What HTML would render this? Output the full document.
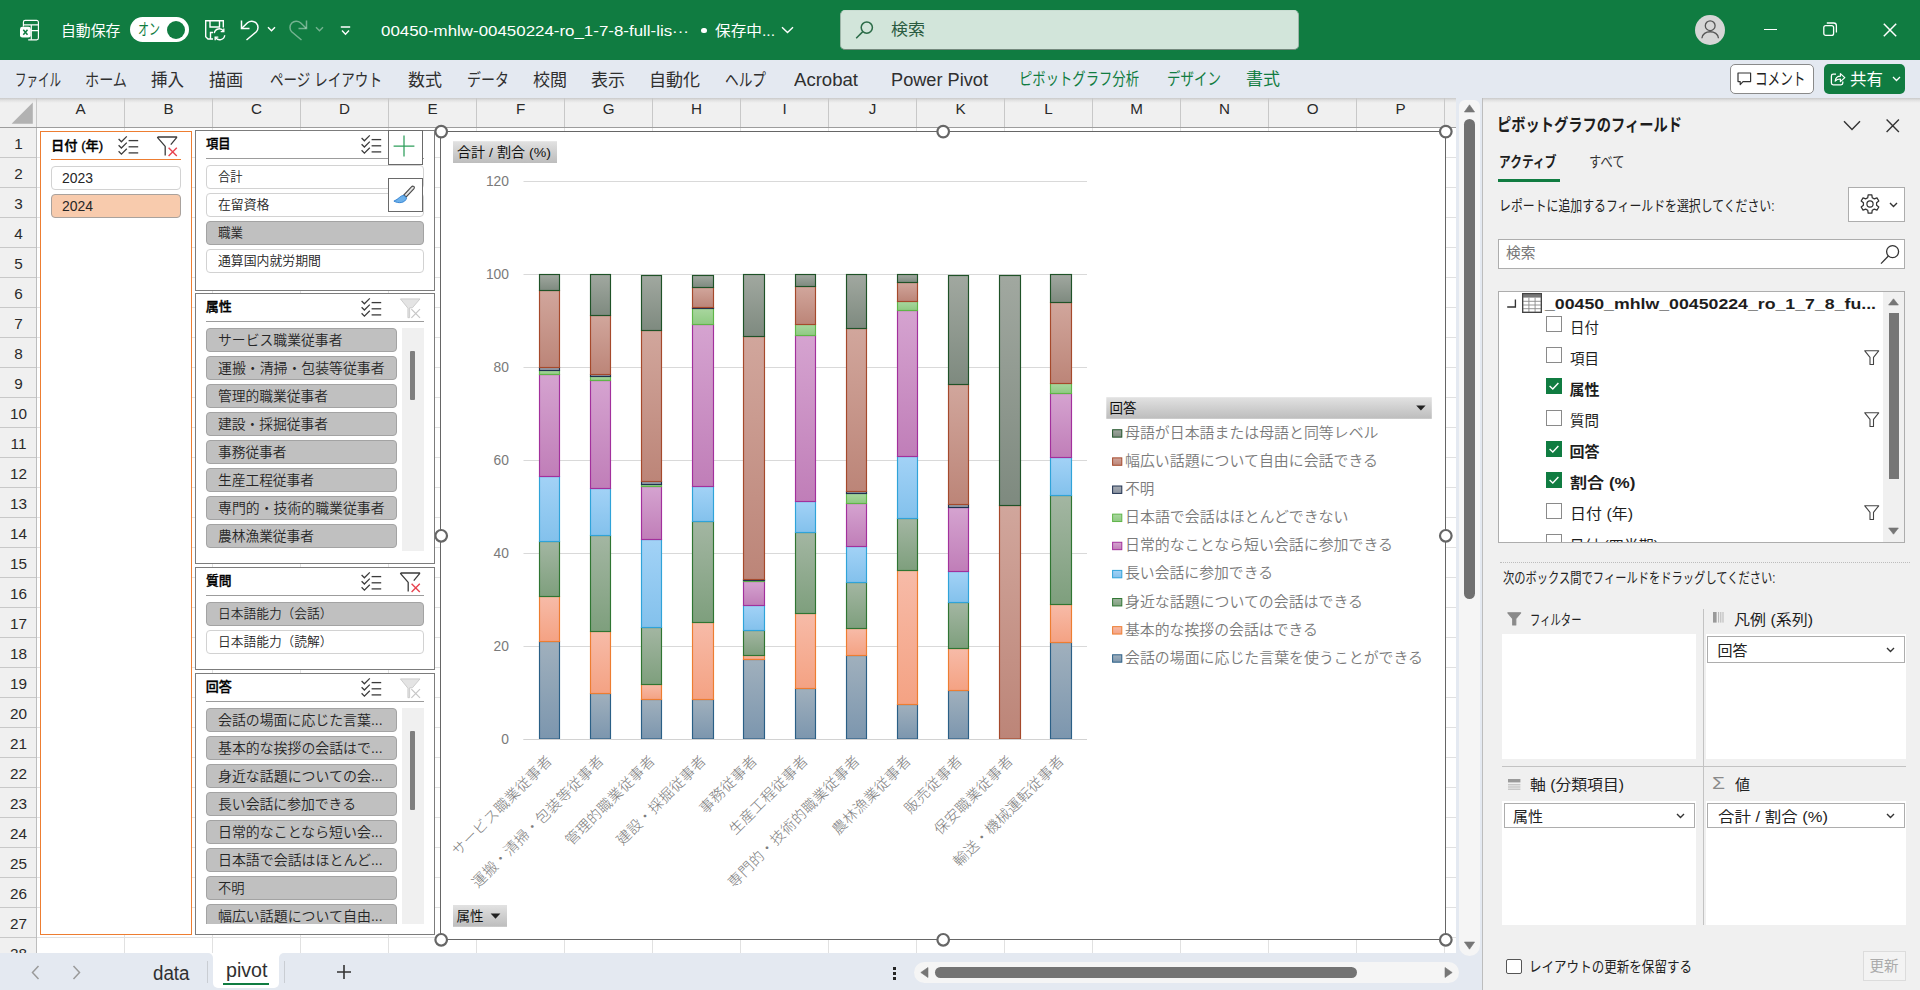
<!DOCTYPE html>
<html lang="ja"><head><meta charset="utf-8"><title>Excel</title>
<style>
html,body{margin:0;padding:0;}
body{width:1920px;height:990px;overflow:hidden;position:relative;background:#fff;font-family:"Liberation Sans","Noto Sans CJK JP",sans-serif;}
.b{position:absolute;box-sizing:border-box;display:block;}
.t{position:absolute;white-space:nowrap;display:block;}
svg{overflow:visible;}
</style></head><body>
<div class="b" style="left:0px;top:98px;width:1483px;height:855px;background:#fff;"></div>
<svg class="b" style="left:0px;top:0px;" width="1483" height="953" viewBox="0 0 1483 953"><path d="M36.5 128 V953" stroke="#E1E1E1" stroke-width="1"/><path d="M124.5 128 V953" stroke="#E1E1E1" stroke-width="1"/><path d="M212.5 128 V953" stroke="#E1E1E1" stroke-width="1"/><path d="M300.5 128 V953" stroke="#E1E1E1" stroke-width="1"/><path d="M388.5 128 V953" stroke="#E1E1E1" stroke-width="1"/><path d="M476.5 128 V953" stroke="#E1E1E1" stroke-width="1"/><path d="M564.5 128 V953" stroke="#E1E1E1" stroke-width="1"/><path d="M652.5 128 V953" stroke="#E1E1E1" stroke-width="1"/><path d="M740.5 128 V953" stroke="#E1E1E1" stroke-width="1"/><path d="M828.5 128 V953" stroke="#E1E1E1" stroke-width="1"/><path d="M916.5 128 V953" stroke="#E1E1E1" stroke-width="1"/><path d="M1004.5 128 V953" stroke="#E1E1E1" stroke-width="1"/><path d="M1092.5 128 V953" stroke="#E1E1E1" stroke-width="1"/><path d="M1180.5 128 V953" stroke="#E1E1E1" stroke-width="1"/><path d="M1268.5 128 V953" stroke="#E1E1E1" stroke-width="1"/><path d="M1356.5 128 V953" stroke="#E1E1E1" stroke-width="1"/><path d="M1444.5 128 V953" stroke="#E1E1E1" stroke-width="1"/><path d="M37 157.5 H1456" stroke="#E1E1E1" stroke-width="1"/><path d="M37 187.5 H1456" stroke="#E1E1E1" stroke-width="1"/><path d="M37 217.5 H1456" stroke="#E1E1E1" stroke-width="1"/><path d="M37 247.5 H1456" stroke="#E1E1E1" stroke-width="1"/><path d="M37 277.5 H1456" stroke="#E1E1E1" stroke-width="1"/><path d="M37 307.5 H1456" stroke="#E1E1E1" stroke-width="1"/><path d="M37 337.5 H1456" stroke="#E1E1E1" stroke-width="1"/><path d="M37 367.5 H1456" stroke="#E1E1E1" stroke-width="1"/><path d="M37 397.5 H1456" stroke="#E1E1E1" stroke-width="1"/><path d="M37 427.5 H1456" stroke="#E1E1E1" stroke-width="1"/><path d="M37 457.5 H1456" stroke="#E1E1E1" stroke-width="1"/><path d="M37 487.5 H1456" stroke="#E1E1E1" stroke-width="1"/><path d="M37 517.5 H1456" stroke="#E1E1E1" stroke-width="1"/><path d="M37 547.5 H1456" stroke="#E1E1E1" stroke-width="1"/><path d="M37 577.5 H1456" stroke="#E1E1E1" stroke-width="1"/><path d="M37 607.5 H1456" stroke="#E1E1E1" stroke-width="1"/><path d="M37 637.5 H1456" stroke="#E1E1E1" stroke-width="1"/><path d="M37 667.5 H1456" stroke="#E1E1E1" stroke-width="1"/><path d="M37 697.5 H1456" stroke="#E1E1E1" stroke-width="1"/><path d="M37 727.5 H1456" stroke="#E1E1E1" stroke-width="1"/><path d="M37 757.5 H1456" stroke="#E1E1E1" stroke-width="1"/><path d="M37 787.5 H1456" stroke="#E1E1E1" stroke-width="1"/><path d="M37 817.5 H1456" stroke="#E1E1E1" stroke-width="1"/><path d="M37 847.5 H1456" stroke="#E1E1E1" stroke-width="1"/><path d="M37 877.5 H1456" stroke="#E1E1E1" stroke-width="1"/><path d="M37 907.5 H1456" stroke="#E1E1E1" stroke-width="1"/><path d="M37 937.5 H1456" stroke="#E1E1E1" stroke-width="1"/></svg>
<div class="b" style="left:0px;top:98px;width:1456px;height:29.5px;background:#F0F0F0;"></div>
<div class="b" style="left:0px;top:127px;width:1456px;height:1px;background:#9D9D9D;"></div>
<div class="b" style="left:0px;top:97.7px;width:1457px;height:5px;background:linear-gradient(rgba(120,120,120,0.32),rgba(120,120,120,0.12) 45%,rgba(120,120,120,0));"></div>
<svg class="b" style="left:0px;top:0px;" width="1483" height="130" viewBox="0 0 1483 130"><path d="M36.5 98 V127" stroke="#C8C8C8" stroke-width="1"/><path d="M124.5 98 V127" stroke="#C8C8C8" stroke-width="1"/><path d="M212.5 98 V127" stroke="#C8C8C8" stroke-width="1"/><path d="M300.5 98 V127" stroke="#C8C8C8" stroke-width="1"/><path d="M388.5 98 V127" stroke="#C8C8C8" stroke-width="1"/><path d="M476.5 98 V127" stroke="#C8C8C8" stroke-width="1"/><path d="M564.5 98 V127" stroke="#C8C8C8" stroke-width="1"/><path d="M652.5 98 V127" stroke="#C8C8C8" stroke-width="1"/><path d="M740.5 98 V127" stroke="#C8C8C8" stroke-width="1"/><path d="M828.5 98 V127" stroke="#C8C8C8" stroke-width="1"/><path d="M916.5 98 V127" stroke="#C8C8C8" stroke-width="1"/><path d="M1004.5 98 V127" stroke="#C8C8C8" stroke-width="1"/><path d="M1092.5 98 V127" stroke="#C8C8C8" stroke-width="1"/><path d="M1180.5 98 V127" stroke="#C8C8C8" stroke-width="1"/><path d="M1268.5 98 V127" stroke="#C8C8C8" stroke-width="1"/><path d="M1356.5 98 V127" stroke="#C8C8C8" stroke-width="1"/><path d="M1444.5 98 V127" stroke="#C8C8C8" stroke-width="1"/></svg>
<span class="t" style="top:98.40px;font-size:15.2px;line-height:21px;color:#2A2A2A;left:80.6px;transform-origin:50% 50%;transform:translateX(-50%) scaleX(1.0000);">A</span>
<span class="t" style="top:98.40px;font-size:15.2px;line-height:21px;color:#2A2A2A;left:168.6px;transform-origin:50% 50%;transform:translateX(-50%) scaleX(1.0000);">B</span>
<span class="t" style="top:98.40px;font-size:15.2px;line-height:21px;color:#2A2A2A;left:256.6px;transform-origin:50% 50%;transform:translateX(-50%) scaleX(1.0000);">C</span>
<span class="t" style="top:98.40px;font-size:15.2px;line-height:21px;color:#2A2A2A;left:344.6px;transform-origin:50% 50%;transform:translateX(-50%) scaleX(1.0000);">D</span>
<span class="t" style="top:98.40px;font-size:15.2px;line-height:21px;color:#2A2A2A;left:432.6px;transform-origin:50% 50%;transform:translateX(-50%) scaleX(1.0000);">E</span>
<span class="t" style="top:98.40px;font-size:15.2px;line-height:21px;color:#2A2A2A;left:520.6px;transform-origin:50% 50%;transform:translateX(-50%) scaleX(1.0000);">F</span>
<span class="t" style="top:98.40px;font-size:15.2px;line-height:21px;color:#2A2A2A;left:608.6px;transform-origin:50% 50%;transform:translateX(-50%) scaleX(1.0000);">G</span>
<span class="t" style="top:98.40px;font-size:15.2px;line-height:21px;color:#2A2A2A;left:696.6px;transform-origin:50% 50%;transform:translateX(-50%) scaleX(1.0000);">H</span>
<span class="t" style="top:98.40px;font-size:15.2px;line-height:21px;color:#2A2A2A;left:784.6px;transform-origin:50% 50%;transform:translateX(-50%) scaleX(1.0000);">I</span>
<span class="t" style="top:98.40px;font-size:15.2px;line-height:21px;color:#2A2A2A;left:872.6px;transform-origin:50% 50%;transform:translateX(-50%) scaleX(1.0000);">J</span>
<span class="t" style="top:98.40px;font-size:15.2px;line-height:21px;color:#2A2A2A;left:960.6px;transform-origin:50% 50%;transform:translateX(-50%) scaleX(1.0000);">K</span>
<span class="t" style="top:98.40px;font-size:15.2px;line-height:21px;color:#2A2A2A;left:1048.6px;transform-origin:50% 50%;transform:translateX(-50%) scaleX(1.0000);">L</span>
<span class="t" style="top:98.40px;font-size:15.2px;line-height:21px;color:#2A2A2A;left:1136.6px;transform-origin:50% 50%;transform:translateX(-50%) scaleX(1.0000);">M</span>
<span class="t" style="top:98.40px;font-size:15.2px;line-height:21px;color:#2A2A2A;left:1224.6px;transform-origin:50% 50%;transform:translateX(-50%) scaleX(1.0000);">N</span>
<span class="t" style="top:98.40px;font-size:15.2px;line-height:21px;color:#2A2A2A;left:1312.6px;transform-origin:50% 50%;transform:translateX(-50%) scaleX(1.0000);">O</span>
<span class="t" style="top:98.40px;font-size:15.2px;line-height:21px;color:#2A2A2A;left:1400.6px;transform-origin:50% 50%;transform:translateX(-50%) scaleX(1.0000);">P</span>
<svg class="b" style="left:0px;top:98px;" width="37" height="30" viewBox="0 0 37 30"><path d="M32.8 4.5 V25.8 H11.6 Z" fill="#B2B2B2"/></svg>
<div class="b" style="left:0px;top:128px;width:36px;height:825px;background:#F0F0F0;"></div>
<div class="b" style="left:36px;top:128px;width:1px;height:825px;background:#BDBDBD;"></div>
<svg class="b" style="left:0px;top:0px;" width="40" height="953" viewBox="0 0 40 953"><path d="M0 157.5 H36" stroke="#C8C8C8" stroke-width="1"/><path d="M0 187.5 H36" stroke="#C8C8C8" stroke-width="1"/><path d="M0 217.5 H36" stroke="#C8C8C8" stroke-width="1"/><path d="M0 247.5 H36" stroke="#C8C8C8" stroke-width="1"/><path d="M0 277.5 H36" stroke="#C8C8C8" stroke-width="1"/><path d="M0 307.5 H36" stroke="#C8C8C8" stroke-width="1"/><path d="M0 337.5 H36" stroke="#C8C8C8" stroke-width="1"/><path d="M0 367.5 H36" stroke="#C8C8C8" stroke-width="1"/><path d="M0 397.5 H36" stroke="#C8C8C8" stroke-width="1"/><path d="M0 427.5 H36" stroke="#C8C8C8" stroke-width="1"/><path d="M0 457.5 H36" stroke="#C8C8C8" stroke-width="1"/><path d="M0 487.5 H36" stroke="#C8C8C8" stroke-width="1"/><path d="M0 517.5 H36" stroke="#C8C8C8" stroke-width="1"/><path d="M0 547.5 H36" stroke="#C8C8C8" stroke-width="1"/><path d="M0 577.5 H36" stroke="#C8C8C8" stroke-width="1"/><path d="M0 607.5 H36" stroke="#C8C8C8" stroke-width="1"/><path d="M0 637.5 H36" stroke="#C8C8C8" stroke-width="1"/><path d="M0 667.5 H36" stroke="#C8C8C8" stroke-width="1"/><path d="M0 697.5 H36" stroke="#C8C8C8" stroke-width="1"/><path d="M0 727.5 H36" stroke="#C8C8C8" stroke-width="1"/><path d="M0 757.5 H36" stroke="#C8C8C8" stroke-width="1"/><path d="M0 787.5 H36" stroke="#C8C8C8" stroke-width="1"/><path d="M0 817.5 H36" stroke="#C8C8C8" stroke-width="1"/><path d="M0 847.5 H36" stroke="#C8C8C8" stroke-width="1"/><path d="M0 877.5 H36" stroke="#C8C8C8" stroke-width="1"/><path d="M0 907.5 H36" stroke="#C8C8C8" stroke-width="1"/><path d="M0 937.5 H36" stroke="#C8C8C8" stroke-width="1"/></svg>
<span class="t" style="top:133.40px;font-size:15.3px;line-height:21px;color:#2A2A2A;left:18.5px;transform-origin:50% 50%;transform:translateX(-50%) scaleX(1.0000);">1</span>
<span class="t" style="top:163.40px;font-size:15.3px;line-height:21px;color:#2A2A2A;left:18.5px;transform-origin:50% 50%;transform:translateX(-50%) scaleX(1.0000);">2</span>
<span class="t" style="top:193.40px;font-size:15.3px;line-height:21px;color:#2A2A2A;left:18.5px;transform-origin:50% 50%;transform:translateX(-50%) scaleX(1.0000);">3</span>
<span class="t" style="top:223.40px;font-size:15.3px;line-height:21px;color:#2A2A2A;left:18.5px;transform-origin:50% 50%;transform:translateX(-50%) scaleX(1.0000);">4</span>
<span class="t" style="top:253.40px;font-size:15.3px;line-height:21px;color:#2A2A2A;left:18.5px;transform-origin:50% 50%;transform:translateX(-50%) scaleX(1.0000);">5</span>
<span class="t" style="top:283.40px;font-size:15.3px;line-height:21px;color:#2A2A2A;left:18.5px;transform-origin:50% 50%;transform:translateX(-50%) scaleX(1.0000);">6</span>
<span class="t" style="top:313.40px;font-size:15.3px;line-height:21px;color:#2A2A2A;left:18.5px;transform-origin:50% 50%;transform:translateX(-50%) scaleX(1.0000);">7</span>
<span class="t" style="top:343.40px;font-size:15.3px;line-height:21px;color:#2A2A2A;left:18.5px;transform-origin:50% 50%;transform:translateX(-50%) scaleX(1.0000);">8</span>
<span class="t" style="top:373.40px;font-size:15.3px;line-height:21px;color:#2A2A2A;left:18.5px;transform-origin:50% 50%;transform:translateX(-50%) scaleX(1.0000);">9</span>
<span class="t" style="top:403.40px;font-size:15.3px;line-height:21px;color:#2A2A2A;left:18.5px;transform-origin:50% 50%;transform:translateX(-50%) scaleX(1.0000);">10</span>
<span class="t" style="top:433.40px;font-size:15.3px;line-height:21px;color:#2A2A2A;left:18.5px;transform-origin:50% 50%;transform:translateX(-50%) scaleX(1.0000);">11</span>
<span class="t" style="top:463.40px;font-size:15.3px;line-height:21px;color:#2A2A2A;left:18.5px;transform-origin:50% 50%;transform:translateX(-50%) scaleX(1.0000);">12</span>
<span class="t" style="top:493.40px;font-size:15.3px;line-height:21px;color:#2A2A2A;left:18.5px;transform-origin:50% 50%;transform:translateX(-50%) scaleX(1.0000);">13</span>
<span class="t" style="top:523.40px;font-size:15.3px;line-height:21px;color:#2A2A2A;left:18.5px;transform-origin:50% 50%;transform:translateX(-50%) scaleX(1.0000);">14</span>
<span class="t" style="top:553.40px;font-size:15.3px;line-height:21px;color:#2A2A2A;left:18.5px;transform-origin:50% 50%;transform:translateX(-50%) scaleX(1.0000);">15</span>
<span class="t" style="top:583.40px;font-size:15.3px;line-height:21px;color:#2A2A2A;left:18.5px;transform-origin:50% 50%;transform:translateX(-50%) scaleX(1.0000);">16</span>
<span class="t" style="top:613.40px;font-size:15.3px;line-height:21px;color:#2A2A2A;left:18.5px;transform-origin:50% 50%;transform:translateX(-50%) scaleX(1.0000);">17</span>
<span class="t" style="top:643.40px;font-size:15.3px;line-height:21px;color:#2A2A2A;left:18.5px;transform-origin:50% 50%;transform:translateX(-50%) scaleX(1.0000);">18</span>
<span class="t" style="top:673.40px;font-size:15.3px;line-height:21px;color:#2A2A2A;left:18.5px;transform-origin:50% 50%;transform:translateX(-50%) scaleX(1.0000);">19</span>
<span class="t" style="top:703.40px;font-size:15.3px;line-height:21px;color:#2A2A2A;left:18.5px;transform-origin:50% 50%;transform:translateX(-50%) scaleX(1.0000);">20</span>
<span class="t" style="top:733.40px;font-size:15.3px;line-height:21px;color:#2A2A2A;left:18.5px;transform-origin:50% 50%;transform:translateX(-50%) scaleX(1.0000);">21</span>
<span class="t" style="top:763.40px;font-size:15.3px;line-height:21px;color:#2A2A2A;left:18.5px;transform-origin:50% 50%;transform:translateX(-50%) scaleX(1.0000);">22</span>
<span class="t" style="top:793.40px;font-size:15.3px;line-height:21px;color:#2A2A2A;left:18.5px;transform-origin:50% 50%;transform:translateX(-50%) scaleX(1.0000);">23</span>
<span class="t" style="top:823.40px;font-size:15.3px;line-height:21px;color:#2A2A2A;left:18.5px;transform-origin:50% 50%;transform:translateX(-50%) scaleX(1.0000);">24</span>
<span class="t" style="top:853.40px;font-size:15.3px;line-height:21px;color:#2A2A2A;left:18.5px;transform-origin:50% 50%;transform:translateX(-50%) scaleX(1.0000);">25</span>
<span class="t" style="top:883.40px;font-size:15.3px;line-height:21px;color:#2A2A2A;left:18.5px;transform-origin:50% 50%;transform:translateX(-50%) scaleX(1.0000);">26</span>
<span class="t" style="top:913.40px;font-size:15.3px;line-height:21px;color:#2A2A2A;left:18.5px;transform-origin:50% 50%;transform:translateX(-50%) scaleX(1.0000);">27</span>
<div class="b" style="left:0;top:938px;width:36px;height:15px;overflow:hidden">
<span class="t" style="left:18.5px;top:5.4px;font-size:15.3px;line-height:21px;color:#2A2A2A;transform:translateX(-50%)">28</span></div>
<div class="b" style="left:440.4px;top:130.9px;width:1005.9px;height:809.2px;background:#fff;border:1.2px solid #666;"></div>
<svg class="b" style="left:0px;top:0px;" width="1483" height="953" viewBox="0 0 1483 953"><defs><linearGradient id="g_steel" x1="0" y1="0" x2="0" y2="1"><stop offset="0" stop-color="#A0B0BD"/><stop offset="1" stop-color="#7C96AE"/></linearGradient><linearGradient id="g_orange" x1="0" y1="0" x2="0" y2="1"><stop offset="0" stop-color="#F7BBA8"/><stop offset="1" stop-color="#F4A283"/></linearGradient><linearGradient id="g_green" x1="0" y1="0" x2="0" y2="1"><stop offset="0" stop-color="#A3B6A2"/><stop offset="1" stop-color="#7E9F7D"/></linearGradient><linearGradient id="g_blue" x1="0" y1="0" x2="0" y2="1"><stop offset="0" stop-color="#A2D2F6"/><stop offset="1" stop-color="#83C1EC"/></linearGradient><linearGradient id="g_purple" x1="0" y1="0" x2="0" y2="1"><stop offset="0" stop-color="#D5A3D0"/><stop offset="1" stop-color="#C07EB8"/></linearGradient><linearGradient id="g_lgreen" x1="0" y1="0" x2="0" y2="1"><stop offset="0" stop-color="#A9D69F"/><stop offset="1" stop-color="#8FCA82"/></linearGradient><linearGradient id="g_unk" x1="0" y1="0" x2="0" y2="1"><stop offset="0" stop-color="#A6ABB2"/><stop offset="1" stop-color="#8A93A0"/></linearGradient><linearGradient id="g_brown" x1="0" y1="0" x2="0" y2="1"><stop offset="0" stop-color="#D1A69C"/><stop offset="1" stop-color="#BC8578"/></linearGradient><linearGradient id="g_dkgreen" x1="0" y1="0" x2="0" y2="1"><stop offset="0" stop-color="#A1A8A0"/><stop offset="1" stop-color="#7E8A7F"/></linearGradient><linearGradient id="g_btn" x1="0" y1="0" x2="0" y2="1"><stop offset="0" stop-color="#E2E2E2"/><stop offset="0.5" stop-color="#CFCFCF"/><stop offset="1" stop-color="#BDBDBD"/></linearGradient></defs><path d="M523.5 739.5 H1087" stroke="#D9D9D9" stroke-width="1"/><path d="M523.5 646.5 H1087" stroke="#D9D9D9" stroke-width="1"/><path d="M523.5 553.5 H1087" stroke="#D9D9D9" stroke-width="1"/><path d="M523.5 460.5 H1087" stroke="#D9D9D9" stroke-width="1"/><path d="M523.5 367.5 H1087" stroke="#D9D9D9" stroke-width="1"/><path d="M523.5 274.5 H1087" stroke="#D9D9D9" stroke-width="1"/><path d="M523.5 181.5 H1087" stroke="#D9D9D9" stroke-width="1"/><rect x="539.5" y="641.5" width="20.0" height="97.5" fill="url(#g_steel)" stroke="#2A5F86" stroke-width="1.15"/><rect x="539.5" y="596.5" width="20.0" height="45.0" fill="url(#g_orange)" stroke="#ED7D31" stroke-width="1.15"/><rect x="539.5" y="541.5" width="20.0" height="55.0" fill="url(#g_green)" stroke="#2F7532" stroke-width="1.15"/><rect x="539.5" y="476.5" width="20.0" height="65.0" fill="url(#g_blue)" stroke="#2FA3D9" stroke-width="1.15"/><rect x="539.5" y="374.5" width="20.0" height="102.0" fill="url(#g_purple)" stroke="#A2309C" stroke-width="1.15"/><rect x="539.5" y="370.5" width="20.0" height="4.0" fill="url(#g_lgreen)" stroke="#5FB548" stroke-width="1.15"/><rect x="539.5" y="367.5" width="20.0" height="3.0" fill="url(#g_unk)" stroke="#1F3150" stroke-width="1.15"/><rect x="539.5" y="290.5" width="20.0" height="77.0" fill="url(#g_brown)" stroke="#A5492B" stroke-width="1.15"/><rect x="539.5" y="274.5" width="20.0" height="16.0" fill="url(#g_dkgreen)" stroke="#1F5227" stroke-width="1.15"/><rect x="590.5" y="693.5" width="20.0" height="45.5" fill="url(#g_steel)" stroke="#2A5F86" stroke-width="1.15"/><rect x="590.5" y="631.5" width="20.0" height="62.0" fill="url(#g_orange)" stroke="#ED7D31" stroke-width="1.15"/><rect x="590.5" y="535.5" width="20.0" height="96.0" fill="url(#g_green)" stroke="#2F7532" stroke-width="1.15"/><rect x="590.5" y="488.5" width="20.0" height="47.0" fill="url(#g_blue)" stroke="#2FA3D9" stroke-width="1.15"/><rect x="590.5" y="380.5" width="20.0" height="108.0" fill="url(#g_purple)" stroke="#A2309C" stroke-width="1.15"/><rect x="590.5" y="376.5" width="20.0" height="4.0" fill="url(#g_lgreen)" stroke="#5FB548" stroke-width="1.15"/><rect x="590.5" y="374.5" width="20.0" height="2.0" fill="url(#g_unk)" stroke="#1F3150" stroke-width="1.15"/><rect x="590.5" y="315.5" width="20.0" height="59.0" fill="url(#g_brown)" stroke="#A5492B" stroke-width="1.15"/><rect x="590.5" y="274.5" width="20.0" height="41.0" fill="url(#g_dkgreen)" stroke="#1F5227" stroke-width="1.15"/><rect x="641.5" y="699.5" width="20.0" height="39.5" fill="url(#g_steel)" stroke="#2A5F86" stroke-width="1.15"/><rect x="641.5" y="684.5" width="20.0" height="15.0" fill="url(#g_orange)" stroke="#ED7D31" stroke-width="1.15"/><rect x="641.5" y="627.5" width="20.0" height="57.0" fill="url(#g_green)" stroke="#2F7532" stroke-width="1.15"/><rect x="641.5" y="539.5" width="20.0" height="88.0" fill="url(#g_blue)" stroke="#2FA3D9" stroke-width="1.15"/><rect x="641.5" y="486.5" width="20.0" height="53.0" fill="url(#g_purple)" stroke="#A2309C" stroke-width="1.15"/><rect x="641.5" y="484.5" width="20.0" height="2.0" fill="url(#g_lgreen)" stroke="#5FB548" stroke-width="1.15"/><rect x="641.5" y="481.5" width="20.0" height="3.0" fill="url(#g_unk)" stroke="#1F3150" stroke-width="1.15"/><rect x="641.5" y="330.5" width="20.0" height="151.0" fill="url(#g_brown)" stroke="#A5492B" stroke-width="1.15"/><rect x="641.5" y="275.5" width="20.0" height="55.0" fill="url(#g_dkgreen)" stroke="#1F5227" stroke-width="1.15"/><rect x="692.5" y="699.5" width="21.0" height="39.5" fill="url(#g_steel)" stroke="#2A5F86" stroke-width="1.15"/><rect x="692.5" y="622.5" width="21.0" height="77.0" fill="url(#g_orange)" stroke="#ED7D31" stroke-width="1.15"/><rect x="692.5" y="521.5" width="21.0" height="101.0" fill="url(#g_green)" stroke="#2F7532" stroke-width="1.15"/><rect x="692.5" y="486.5" width="21.0" height="35.0" fill="url(#g_blue)" stroke="#2FA3D9" stroke-width="1.15"/><rect x="692.5" y="324.5" width="21.0" height="162.0" fill="url(#g_purple)" stroke="#A2309C" stroke-width="1.15"/><rect x="692.5" y="308.5" width="21.0" height="16.0" fill="url(#g_lgreen)" stroke="#5FB548" stroke-width="1.15"/><rect x="692.5" y="307.5" width="21.0" height="1.0" fill="url(#g_unk)" stroke="#1F3150" stroke-width="1.15"/><rect x="692.5" y="287.5" width="21.0" height="20.0" fill="url(#g_brown)" stroke="#A5492B" stroke-width="1.15"/><rect x="692.5" y="275.5" width="21.0" height="12.0" fill="url(#g_dkgreen)" stroke="#1F5227" stroke-width="1.15"/><rect x="743.5" y="659.5" width="21.0" height="79.5" fill="url(#g_steel)" stroke="#2A5F86" stroke-width="1.15"/><rect x="743.5" y="655.5" width="21.0" height="4.0" fill="url(#g_orange)" stroke="#ED7D31" stroke-width="1.15"/><rect x="743.5" y="630.5" width="21.0" height="25.0" fill="url(#g_green)" stroke="#2F7532" stroke-width="1.15"/><rect x="743.5" y="605.5" width="21.0" height="25.0" fill="url(#g_blue)" stroke="#2FA3D9" stroke-width="1.15"/><rect x="743.5" y="581.5" width="21.0" height="24.0" fill="url(#g_purple)" stroke="#A2309C" stroke-width="1.15"/><rect x="743.5" y="580.5" width="21.0" height="1.0" fill="url(#g_lgreen)" stroke="#5FB548" stroke-width="1.15"/><rect x="743.5" y="579.5" width="21.0" height="1.0" fill="url(#g_unk)" stroke="#1F3150" stroke-width="1.15"/><rect x="743.5" y="336.5" width="21.0" height="243.0" fill="url(#g_brown)" stroke="#A5492B" stroke-width="1.15"/><rect x="743.5" y="274.5" width="21.0" height="62.0" fill="url(#g_dkgreen)" stroke="#1F5227" stroke-width="1.15"/><rect x="795.5" y="688.5" width="20.0" height="50.5" fill="url(#g_steel)" stroke="#2A5F86" stroke-width="1.15"/><rect x="795.5" y="613.5" width="20.0" height="75.0" fill="url(#g_orange)" stroke="#ED7D31" stroke-width="1.15"/><rect x="795.5" y="532.5" width="20.0" height="81.0" fill="url(#g_green)" stroke="#2F7532" stroke-width="1.15"/><rect x="795.5" y="501.5" width="20.0" height="31.0" fill="url(#g_blue)" stroke="#2FA3D9" stroke-width="1.15"/><rect x="795.5" y="335.5" width="20.0" height="166.0" fill="url(#g_purple)" stroke="#A2309C" stroke-width="1.15"/><rect x="795.5" y="324.5" width="20.0" height="11.0" fill="url(#g_lgreen)" stroke="#5FB548" stroke-width="1.15"/><rect x="795.5" y="286.5" width="20.0" height="38.0" fill="url(#g_brown)" stroke="#A5492B" stroke-width="1.15"/><rect x="795.5" y="274.5" width="20.0" height="12.0" fill="url(#g_dkgreen)" stroke="#1F5227" stroke-width="1.15"/><rect x="846.5" y="655.5" width="20.0" height="83.5" fill="url(#g_steel)" stroke="#2A5F86" stroke-width="1.15"/><rect x="846.5" y="628.5" width="20.0" height="27.0" fill="url(#g_orange)" stroke="#ED7D31" stroke-width="1.15"/><rect x="846.5" y="582.5" width="20.0" height="46.0" fill="url(#g_green)" stroke="#2F7532" stroke-width="1.15"/><rect x="846.5" y="546.5" width="20.0" height="36.0" fill="url(#g_blue)" stroke="#2FA3D9" stroke-width="1.15"/><rect x="846.5" y="503.5" width="20.0" height="43.0" fill="url(#g_purple)" stroke="#A2309C" stroke-width="1.15"/><rect x="846.5" y="493.5" width="20.0" height="10.0" fill="url(#g_lgreen)" stroke="#5FB548" stroke-width="1.15"/><rect x="846.5" y="491.5" width="20.0" height="2.0" fill="url(#g_unk)" stroke="#1F3150" stroke-width="1.15"/><rect x="846.5" y="328.5" width="20.0" height="163.0" fill="url(#g_brown)" stroke="#A5492B" stroke-width="1.15"/><rect x="846.5" y="274.5" width="20.0" height="54.0" fill="url(#g_dkgreen)" stroke="#1F5227" stroke-width="1.15"/><rect x="897.5" y="704.5" width="20.0" height="34.5" fill="url(#g_steel)" stroke="#2A5F86" stroke-width="1.15"/><rect x="897.5" y="570.5" width="20.0" height="134.0" fill="url(#g_orange)" stroke="#ED7D31" stroke-width="1.15"/><rect x="897.5" y="518.5" width="20.0" height="52.0" fill="url(#g_green)" stroke="#2F7532" stroke-width="1.15"/><rect x="897.5" y="456.5" width="20.0" height="62.0" fill="url(#g_blue)" stroke="#2FA3D9" stroke-width="1.15"/><rect x="897.5" y="310.5" width="20.0" height="146.0" fill="url(#g_purple)" stroke="#A2309C" stroke-width="1.15"/><rect x="897.5" y="301.5" width="20.0" height="9.0" fill="url(#g_lgreen)" stroke="#5FB548" stroke-width="1.15"/><rect x="897.5" y="282.5" width="20.0" height="19.0" fill="url(#g_brown)" stroke="#A5492B" stroke-width="1.15"/><rect x="897.5" y="274.5" width="20.0" height="8.0" fill="url(#g_dkgreen)" stroke="#1F5227" stroke-width="1.15"/><rect x="948.5" y="690.5" width="20.0" height="48.5" fill="url(#g_steel)" stroke="#2A5F86" stroke-width="1.15"/><rect x="948.5" y="648.5" width="20.0" height="42.0" fill="url(#g_orange)" stroke="#ED7D31" stroke-width="1.15"/><rect x="948.5" y="602.5" width="20.0" height="46.0" fill="url(#g_green)" stroke="#2F7532" stroke-width="1.15"/><rect x="948.5" y="571.5" width="20.0" height="31.0" fill="url(#g_blue)" stroke="#2FA3D9" stroke-width="1.15"/><rect x="948.5" y="507.5" width="20.0" height="64.0" fill="url(#g_purple)" stroke="#A2309C" stroke-width="1.15"/><rect x="948.5" y="504.5" width="20.0" height="3.0" fill="url(#g_unk)" stroke="#1F3150" stroke-width="1.15"/><rect x="948.5" y="384.5" width="20.0" height="120.0" fill="url(#g_brown)" stroke="#A5492B" stroke-width="1.15"/><rect x="948.5" y="275.5" width="20.0" height="109.0" fill="url(#g_dkgreen)" stroke="#1F5227" stroke-width="1.15"/><rect x="999.5" y="505.5" width="21.0" height="233.5" fill="url(#g_brown)" stroke="#A5492B" stroke-width="1.15"/><rect x="999.5" y="275.5" width="21.0" height="230.0" fill="url(#g_dkgreen)" stroke="#1F5227" stroke-width="1.15"/><rect x="1050.5" y="642.5" width="21.0" height="96.5" fill="url(#g_steel)" stroke="#2A5F86" stroke-width="1.15"/><rect x="1050.5" y="604.5" width="21.0" height="38.0" fill="url(#g_orange)" stroke="#ED7D31" stroke-width="1.15"/><rect x="1050.5" y="495.5" width="21.0" height="109.0" fill="url(#g_green)" stroke="#2F7532" stroke-width="1.15"/><rect x="1050.5" y="457.5" width="21.0" height="38.0" fill="url(#g_blue)" stroke="#2FA3D9" stroke-width="1.15"/><rect x="1050.5" y="393.5" width="21.0" height="64.0" fill="url(#g_purple)" stroke="#A2309C" stroke-width="1.15"/><rect x="1050.5" y="383.5" width="21.0" height="10.0" fill="url(#g_lgreen)" stroke="#5FB548" stroke-width="1.15"/><rect x="1050.5" y="302.5" width="21.0" height="81.0" fill="url(#g_brown)" stroke="#A5492B" stroke-width="1.15"/><rect x="1050.5" y="274.5" width="21.0" height="28.0" fill="url(#g_dkgreen)" stroke="#1F5227" stroke-width="1.15"/><path d="M523.5 739.5 H1087" stroke="#D2D2D2" stroke-width="1.2"/><rect x="453" y="141.2" width="104" height="21.8" fill="url(#g_btn)"/><rect x="453" y="905" width="54" height="21.8" fill="url(#g_btn)"/><path d="M490.6 913.6 H500.4 L495.5 918.8 Z" fill="#222"/><rect x="1106.3" y="397.2" width="325.5" height="21.6" fill="url(#g_btn)"/><path d="M1416.2 405.6 H1425.6 L1420.9 410.6 Z" fill="#222"/><rect x="1112.6" y="429.75" width="9.2" height="7.4" fill="url(#g_dkgreen)" stroke="#1F5227" stroke-width="1"/><rect x="1112.6" y="457.88" width="9.2" height="7.4" fill="url(#g_brown)" stroke="#A5492B" stroke-width="1"/><rect x="1112.6" y="486.01" width="9.2" height="7.4" fill="url(#g_unk)" stroke="#1F3150" stroke-width="1"/><rect x="1112.6" y="514.14" width="9.2" height="7.4" fill="url(#g_lgreen)" stroke="#5FB548" stroke-width="1"/><rect x="1112.6" y="542.27" width="9.2" height="7.4" fill="url(#g_purple)" stroke="#A2309C" stroke-width="1"/><rect x="1112.6" y="570.40" width="9.2" height="7.4" fill="url(#g_blue)" stroke="#2FA3D9" stroke-width="1"/><rect x="1112.6" y="598.53" width="9.2" height="7.4" fill="url(#g_green)" stroke="#2F7532" stroke-width="1"/><rect x="1112.6" y="626.66" width="9.2" height="7.4" fill="url(#g_orange)" stroke="#ED7D31" stroke-width="1"/><rect x="1112.6" y="654.79" width="9.2" height="7.4" fill="url(#g_steel)" stroke="#2A5F86" stroke-width="1"/></svg>
<span class="t" style="top:142.70px;font-size:13.5px;line-height:19px;color:#111;left:456.5px;transform-origin:0 50%;transform:scaleX(1.0444);">合計 / 割合 (%)</span>
<span class="t" style="top:906.50px;font-size:13.5px;line-height:19px;color:#111;left:456.5px;transform-origin:0 50%;">属性</span>
<span class="t" style="top:398.50px;font-size:13.5px;line-height:19px;color:#111;left:1109.4px;transform-origin:0 50%;">回答</span>
<span class="t" style="top:729.65px;font-size:13.8px;line-height:19px;color:#7A7A7A;right:1411.1px;transform-origin:100% 50%;">0</span>
<span class="t" style="top:636.65px;font-size:13.8px;line-height:19px;color:#7A7A7A;right:1411.1px;transform-origin:100% 50%;">20</span>
<span class="t" style="top:543.65px;font-size:13.8px;line-height:19px;color:#7A7A7A;right:1411.1px;transform-origin:100% 50%;">40</span>
<span class="t" style="top:450.65px;font-size:13.8px;line-height:19px;color:#7A7A7A;right:1411.1px;transform-origin:100% 50%;">60</span>
<span class="t" style="top:357.65px;font-size:13.8px;line-height:19px;color:#7A7A7A;right:1411.1px;transform-origin:100% 50%;">80</span>
<span class="t" style="top:264.65px;font-size:13.8px;line-height:19px;color:#7A7A7A;right:1411.1px;transform-origin:100% 50%;">100</span>
<span class="t" style="top:171.65px;font-size:13.8px;line-height:19px;color:#7A7A7A;right:1411.1px;transform-origin:100% 50%;">120</span>
<span class="t" style="top:422.80px;font-size:14.5px;line-height:20px;color:#7A7A7A;font-weight:350;left:1125.2px;transform-origin:0 50%;transform:scaleX(1.0284);">母語が日本語または母語と同等レベル</span>
<span class="t" style="top:450.93px;font-size:14.5px;line-height:20px;color:#7A7A7A;font-weight:350;left:1125.2px;transform-origin:0 50%;transform:scaleX(1.0294);">幅広い話題について自由に会話できる</span>
<span class="t" style="top:479.06px;font-size:14.5px;line-height:20px;color:#7A7A7A;font-weight:350;left:1125.2px;transform-origin:0 50%;">不明</span>
<span class="t" style="top:507.19px;font-size:14.5px;line-height:20px;color:#7A7A7A;font-weight:350;left:1125.2px;transform-origin:0 50%;transform:scaleX(1.0310);">日本語で会話はほとんどできない</span>
<span class="t" style="top:535.32px;font-size:14.5px;line-height:20px;color:#7A7A7A;font-weight:350;left:1125.2px;transform-origin:0 50%;transform:scaleX(1.0297);">日常的なことなら短い会話に参加できる</span>
<span class="t" style="top:563.45px;font-size:14.5px;line-height:20px;color:#7A7A7A;font-weight:350;left:1125.2px;transform-origin:0 50%;transform:scaleX(1.0227);">長い会話に参加できる</span>
<span class="t" style="top:591.58px;font-size:14.5px;line-height:20px;color:#7A7A7A;font-weight:350;left:1125.2px;transform-origin:0 50%;transform:scaleX(1.0291);">身近な話題についての会話はできる</span>
<span class="t" style="top:619.71px;font-size:14.5px;line-height:20px;color:#7A7A7A;font-weight:350;left:1125.2px;transform-origin:0 50%;transform:scaleX(1.0254);">基本的な挨拶の会話はできる</span>
<span class="t" style="top:647.84px;font-size:14.5px;line-height:20px;color:#7A7A7A;font-weight:350;left:1125.2px;transform-origin:0 50%;transform:scaleX(1.0286);">会話の場面に応じた言葉を使うことができる</span>
<span class="t" style="right:1370.1px;top:747.6px;font-size:14.5px;line-height:20px;font-weight:300;color:#7C7C7C;letter-spacing:0.45px;transform-origin:100% 50%;transform:rotate(-45deg)">サービス職業従事者</span>
<span class="t" style="right:1318.9px;top:747.6px;font-size:14.5px;line-height:20px;font-weight:300;color:#7C7C7C;letter-spacing:0.45px;transform-origin:100% 50%;transform:rotate(-45deg)">運搬・清掃・包装等従事者</span>
<span class="t" style="right:1267.7px;top:747.6px;font-size:14.5px;line-height:20px;font-weight:300;color:#7C7C7C;letter-spacing:0.45px;transform-origin:100% 50%;transform:rotate(-45deg)">管理的職業従事者</span>
<span class="t" style="right:1216.5px;top:747.6px;font-size:14.5px;line-height:20px;font-weight:300;color:#7C7C7C;letter-spacing:0.45px;transform-origin:100% 50%;transform:rotate(-45deg)">建設・採掘従事者</span>
<span class="t" style="right:1165.3px;top:747.6px;font-size:14.5px;line-height:20px;font-weight:300;color:#7C7C7C;letter-spacing:0.45px;transform-origin:100% 50%;transform:rotate(-45deg)">事務従事者</span>
<span class="t" style="right:1114.1px;top:747.6px;font-size:14.5px;line-height:20px;font-weight:300;color:#7C7C7C;letter-spacing:0.45px;transform-origin:100% 50%;transform:rotate(-45deg)">生産工程従事者</span>
<span class="t" style="right:1062.9px;top:747.6px;font-size:14.5px;line-height:20px;font-weight:300;color:#7C7C7C;letter-spacing:0.45px;transform-origin:100% 50%;transform:rotate(-45deg)">専門的・技術的職業従事者</span>
<span class="t" style="right:1011.7px;top:747.6px;font-size:14.5px;line-height:20px;font-weight:300;color:#7C7C7C;letter-spacing:0.45px;transform-origin:100% 50%;transform:rotate(-45deg)">農林漁業従事者</span>
<span class="t" style="right:960.5px;top:747.6px;font-size:14.5px;line-height:20px;font-weight:300;color:#7C7C7C;letter-spacing:0.45px;transform-origin:100% 50%;transform:rotate(-45deg)">販売従事者</span>
<span class="t" style="right:909.3px;top:747.6px;font-size:14.5px;line-height:20px;font-weight:300;color:#7C7C7C;letter-spacing:0.45px;transform-origin:100% 50%;transform:rotate(-45deg)">保安職業従事者</span>
<span class="t" style="right:858.1px;top:747.6px;font-size:14.5px;line-height:20px;font-weight:300;color:#7C7C7C;letter-spacing:0.45px;transform-origin:100% 50%;transform:rotate(-45deg)">輸送・機械運転従事者</span>
<svg class="b" style="left:0px;top:0px;" width="1483" height="953" viewBox="0 0 1483 953"><circle cx="441.2" cy="131.6" r="5.8" fill="#fff" stroke="#666" stroke-width="2.2"/><circle cx="943.2" cy="131.6" r="5.8" fill="#fff" stroke="#666" stroke-width="2.2"/><circle cx="1445.8" cy="131.6" r="5.8" fill="#fff" stroke="#666" stroke-width="2.2"/><circle cx="441.2" cy="535.8" r="5.8" fill="#fff" stroke="#666" stroke-width="2.2"/><circle cx="1445.8" cy="535.8" r="5.8" fill="#fff" stroke="#666" stroke-width="2.2"/><circle cx="441.2" cy="939.8" r="5.8" fill="#fff" stroke="#666" stroke-width="2.2"/><circle cx="943.2" cy="939.8" r="5.8" fill="#fff" stroke="#666" stroke-width="2.2"/><circle cx="1445.8" cy="939.8" r="5.8" fill="#fff" stroke="#666" stroke-width="2.2"/></svg>
<div class="b" style="left:39.7px;top:131.1px;width:152.4px;height:804px;background:#fff;border:1px solid #ED7D31;"></div>
<span class="t" style="top:136.60px;font-size:13px;line-height:18px;color:#000;font-weight:500;left:50.7px;transform-origin:0 50%;transform:scaleX(1.0179);-webkit-text-stroke:0.35px #000;">日付 (年)</span>
<svg class="b" style="left:117.8px;top:135.9px;" width="21" height="19" viewBox="0 0 21 19"><path d="M0.6 2.9999999999999996 L3.4 5.8 L8.8 0.39999999999999947" fill="none" stroke="#3b3b3b" stroke-width="1.25"/><path d="M10.6 4.6 H20.2" stroke="#3b3b3b" stroke-width="1.3"/><path d="M0.6 9.200000000000001 L3.4 12.0 L8.8 6.6000000000000005" fill="none" stroke="#3b3b3b" stroke-width="1.25"/><path d="M10.6 10.8 H20.2" stroke="#3b3b3b" stroke-width="1.3"/><path d="M0.6 15.299999999999999 L3.4 18.099999999999998 L8.8 12.7" fill="none" stroke="#3b3b3b" stroke-width="1.25"/><path d="M10.6 16.9 H20.2" stroke="#3b3b3b" stroke-width="1.3"/></svg>
<svg class="b" style="left:156.8px;top:135.9px;" width="21" height="21" viewBox="0 0 21 21"><path d="M0.6 1 H19.6 V1.6 L13.8 8.6 M0.6 1 V1.6 L8.2 10.4 V19.6" fill="none" stroke="#3b3b3b" stroke-width="1.3" stroke-linejoin="round"/><path d="M11.6 11.8 L19.8 20 M19.8 11.8 L11.6 20" stroke="#E8434F" stroke-width="1.4"/></svg>
<div class="b" style="left:51.2px;top:159px;width:130px;height:1px;background:#ED7D31;"></div>
<div class="b" style="left:51.2px;top:165.9px;width:130px;height:23.7px;background:#fff;border:1px solid #D2D2D2;border-radius:4px;"></div>
<span class="t" style="top:168.15px;font-size:14px;line-height:20px;color:#262626;font-weight:350;left:62.0px;transform-origin:0 50%;transform:scaleX(0.9950);">2023</span>
<div class="b" style="left:51.2px;top:194.1px;width:130px;height:23.7px;background:#F8CBAD;border:1px solid #A9A29D;border-radius:4px;"></div>
<span class="t" style="top:196.35px;font-size:14px;line-height:20px;color:#262626;font-weight:350;left:62.0px;transform-origin:0 50%;transform:scaleX(0.9950);">2024</span>
<div class="b" style="left:195px;top:130px;width:240px;height:161px;background:#fff;border:1px solid #7C7C7C;"></div>
<span class="t" style="top:135.20px;font-size:13px;line-height:18px;color:#000;font-weight:500;left:205.8px;transform-origin:0 50%;transform:scaleX(0.9456);-webkit-text-stroke:0.35px #000;">項目</span>
<svg class="b" style="left:360.5px;top:135px;" width="21" height="19" viewBox="0 0 21 19"><path d="M0.6 2.9999999999999996 L3.4 5.8 L8.8 0.39999999999999947" fill="none" stroke="#3b3b3b" stroke-width="1.25"/><path d="M10.6 4.6 H20.2" stroke="#3b3b3b" stroke-width="1.3"/><path d="M0.6 9.200000000000001 L3.4 12.0 L8.8 6.6000000000000005" fill="none" stroke="#3b3b3b" stroke-width="1.25"/><path d="M10.6 10.8 H20.2" stroke="#3b3b3b" stroke-width="1.3"/><path d="M0.6 15.299999999999999 L3.4 18.099999999999998 L8.8 12.7" fill="none" stroke="#3b3b3b" stroke-width="1.25"/><path d="M10.6 16.9 H20.2" stroke="#3b3b3b" stroke-width="1.3"/></svg>
<div class="b" style="left:206px;top:158px;width:218px;height:1px;background:#9C9C9C;"></div>
<div class="b" style="left:206px;top:165px;width:218px;height:23.7px;background:#fff;border:1px solid #D2D2D2;border-radius:4px;"></div>
<span class="t" style="top:167.95px;font-size:13px;line-height:18px;color:#262626;font-weight:350;left:217.6px;transform-origin:0 50%;transform:scaleX(0.9456);">合計</span>
<div class="b" style="left:206px;top:193px;width:218px;height:23.7px;background:#fff;border:1px solid #D2D2D2;border-radius:4px;"></div>
<span class="t" style="top:195.95px;font-size:13px;line-height:18px;color:#262626;font-weight:350;left:217.6px;transform-origin:0 50%;transform:scaleX(0.9862);">在留資格</span>
<div class="b" style="left:206px;top:221px;width:218px;height:23.7px;background:#C0C0C0;border:1px solid #A3A3A3;border-radius:4px;"></div>
<span class="t" style="top:223.95px;font-size:13px;line-height:18px;color:#262626;font-weight:350;left:217.6px;transform-origin:0 50%;transform:scaleX(0.9610);">職業</span>
<div class="b" style="left:206px;top:249px;width:218px;height:23.7px;background:#fff;border:1px solid #D2D2D2;border-radius:4px;"></div>
<span class="t" style="top:251.95px;font-size:13px;line-height:18px;color:#262626;font-weight:350;left:217.6px;transform-origin:0 50%;transform:scaleX(0.9902);">通算国内就労期間</span>
<div class="b" style="left:195px;top:293px;width:240px;height:270.7px;background:#fff;border:1px solid #7C7C7C;"></div>
<span class="t" style="top:298.30px;font-size:13px;line-height:18px;color:#000;font-weight:500;left:205.8px;transform-origin:0 50%;-webkit-text-stroke:0.35px #000;">属性</span>
<svg class="b" style="left:360.5px;top:298.2px;" width="21" height="19" viewBox="0 0 21 19"><path d="M0.6 2.9999999999999996 L3.4 5.8 L8.8 0.39999999999999947" fill="none" stroke="#3b3b3b" stroke-width="1.25"/><path d="M10.6 4.6 H20.2" stroke="#3b3b3b" stroke-width="1.3"/><path d="M0.6 9.200000000000001 L3.4 12.0 L8.8 6.6000000000000005" fill="none" stroke="#3b3b3b" stroke-width="1.25"/><path d="M10.6 10.8 H20.2" stroke="#3b3b3b" stroke-width="1.3"/><path d="M0.6 15.299999999999999 L3.4 18.099999999999998 L8.8 12.7" fill="none" stroke="#3b3b3b" stroke-width="1.25"/><path d="M10.6 16.9 H20.2" stroke="#3b3b3b" stroke-width="1.3"/></svg>
<svg class="b" style="left:400px;top:298.2px;" width="21" height="21" viewBox="0 0 21 21"><path d="M0.4 0.9 H20 L12.4 9.8 H9.6 V19.7 H7.9 V10.2 Z" fill="#E4E4E4" stroke="#CACACA" stroke-width="0.9" stroke-linejoin="round"/><path d="M11.4 11.2 L20 19.8 M20 11.2 L11.4 19.8" stroke="#fff" stroke-width="2.6"/><path d="M11.4 11.2 L20 19.8 M20 11.2 L11.4 19.8" stroke="#C6C6C6" stroke-width="1.2"/></svg>
<div class="b" style="left:206px;top:321px;width:218px;height:1px;background:#9C9C9C;"></div>
<div class="b" style="left:206.2px;top:328.2px;width:190.8px;height:23.7px;background:#C0C0C0;border:1px solid #A3A3A3;border-radius:4px;"></div>
<span class="t" style="top:330.15px;font-size:14px;line-height:20px;color:#262626;font-weight:350;left:217.79999999999998px;transform-origin:0 50%;transform:scaleX(0.9881);">サービス職業従事者</span>
<div class="b" style="left:206.2px;top:356.15px;width:190.8px;height:23.7px;background:#C0C0C0;border:1px solid #A3A3A3;border-radius:4px;"></div>
<span class="t" style="top:358.10px;font-size:14px;line-height:20px;color:#262626;font-weight:350;left:217.79999999999998px;transform-origin:0 50%;transform:scaleX(0.9911);">運搬・清掃・包装等従事者</span>
<div class="b" style="left:206.2px;top:384.09999999999997px;width:190.8px;height:23.7px;background:#C0C0C0;border:1px solid #A3A3A3;border-radius:4px;"></div>
<span class="t" style="top:386.05px;font-size:14px;line-height:20px;color:#262626;font-weight:350;left:217.79999999999998px;transform-origin:0 50%;transform:scaleX(0.9821);">管理的職業従事者</span>
<div class="b" style="left:206.2px;top:412.04999999999995px;width:190.8px;height:23.7px;background:#C0C0C0;border:1px solid #A3A3A3;border-radius:4px;"></div>
<span class="t" style="top:414.00px;font-size:14px;line-height:20px;color:#262626;font-weight:350;left:217.79999999999998px;transform-origin:0 50%;transform:scaleX(0.9821);">建設・採掘従事者</span>
<div class="b" style="left:206.2px;top:440.0px;width:190.8px;height:23.7px;background:#C0C0C0;border:1px solid #A3A3A3;border-radius:4px;"></div>
<span class="t" style="top:441.95px;font-size:14px;line-height:20px;color:#262626;font-weight:350;left:217.79999999999998px;transform-origin:0 50%;transform:scaleX(0.9786);">事務従事者</span>
<div class="b" style="left:206.2px;top:467.95px;width:190.8px;height:23.7px;background:#C0C0C0;border:1px solid #A3A3A3;border-radius:4px;"></div>
<span class="t" style="top:469.90px;font-size:14px;line-height:20px;color:#262626;font-weight:350;left:217.79999999999998px;transform-origin:0 50%;transform:scaleX(0.9796);">生産工程従事者</span>
<div class="b" style="left:206.2px;top:495.9px;width:190.8px;height:23.7px;background:#C0C0C0;border:1px solid #A3A3A3;border-radius:4px;"></div>
<span class="t" style="top:497.85px;font-size:14px;line-height:20px;color:#262626;font-weight:350;left:217.79999999999998px;transform-origin:0 50%;transform:scaleX(0.9911);">専門的・技術的職業従事者</span>
<div class="b" style="left:206.2px;top:523.85px;width:190.8px;height:23.7px;background:#C0C0C0;border:1px solid #A3A3A3;border-radius:4px;"></div>
<span class="t" style="top:525.80px;font-size:14px;line-height:20px;color:#262626;font-weight:350;left:217.79999999999998px;transform-origin:0 50%;transform:scaleX(0.9796);">農林漁業従事者</span>
<div class="b" style="left:402px;top:328.2px;width:22px;height:223px;background:#F0F0F0;"></div>
<div class="b" style="left:410px;top:351.4px;width:5px;height:48.2px;background:#7F7F7F;border-radius:1px;"></div>
<div class="b" style="left:195px;top:567px;width:240px;height:102.6px;background:#fff;border:1px solid #7C7C7C;"></div>
<span class="t" style="top:572.20px;font-size:13px;line-height:18px;color:#000;font-weight:500;left:205.8px;transform-origin:0 50%;transform:scaleX(0.9840);-webkit-text-stroke:0.35px #000;">質問</span>
<svg class="b" style="left:360.5px;top:572px;" width="21" height="19" viewBox="0 0 21 19"><path d="M0.6 2.9999999999999996 L3.4 5.8 L8.8 0.39999999999999947" fill="none" stroke="#3b3b3b" stroke-width="1.25"/><path d="M10.6 4.6 H20.2" stroke="#3b3b3b" stroke-width="1.3"/><path d="M0.6 9.200000000000001 L3.4 12.0 L8.8 6.6000000000000005" fill="none" stroke="#3b3b3b" stroke-width="1.25"/><path d="M10.6 10.8 H20.2" stroke="#3b3b3b" stroke-width="1.3"/><path d="M0.6 15.299999999999999 L3.4 18.099999999999998 L8.8 12.7" fill="none" stroke="#3b3b3b" stroke-width="1.25"/><path d="M10.6 16.9 H20.2" stroke="#3b3b3b" stroke-width="1.3"/></svg>
<svg class="b" style="left:400px;top:572px;" width="21" height="21" viewBox="0 0 21 21"><path d="M0.6 1 H19.6 V1.6 L13.8 8.6 M0.6 1 V1.6 L8.2 10.4 V19.6" fill="none" stroke="#3b3b3b" stroke-width="1.3" stroke-linejoin="round"/><path d="M11.6 11.8 L19.8 20 M19.8 11.8 L11.6 20" stroke="#E8434F" stroke-width="1.4"/></svg>
<div class="b" style="left:206px;top:595px;width:218px;height:1px;background:#9C9C9C;"></div>
<div class="b" style="left:206.2px;top:602px;width:217.6px;height:23.7px;background:#C0C0C0;border:1px solid #A3A3A3;border-radius:4px;"></div>
<span class="t" style="top:604.95px;font-size:13px;line-height:18px;color:#262626;font-weight:350;left:217.79999999999998px;transform-origin:0 50%;transform:scaleX(0.9785);">日本語能力（会話）</span>
<div class="b" style="left:206.2px;top:630px;width:217.6px;height:23.7px;background:#fff;border:1px solid #D2D2D2;border-radius:4px;"></div>
<span class="t" style="top:632.95px;font-size:13px;line-height:18px;color:#262626;font-weight:350;left:217.79999999999998px;transform-origin:0 50%;transform:scaleX(0.9785);">日本語能力（読解）</span>
<div class="b" style="left:195px;top:673px;width:240px;height:262.2px;background:#fff;border:1px solid #7C7C7C;"></div>
<span class="t" style="top:678.40px;font-size:13px;line-height:18px;color:#000;font-weight:500;left:205.8px;transform-origin:0 50%;-webkit-text-stroke:0.35px #000;">回答</span>
<svg class="b" style="left:360.5px;top:678.2px;" width="21" height="19" viewBox="0 0 21 19"><path d="M0.6 2.9999999999999996 L3.4 5.8 L8.8 0.39999999999999947" fill="none" stroke="#3b3b3b" stroke-width="1.25"/><path d="M10.6 4.6 H20.2" stroke="#3b3b3b" stroke-width="1.3"/><path d="M0.6 9.200000000000001 L3.4 12.0 L8.8 6.6000000000000005" fill="none" stroke="#3b3b3b" stroke-width="1.25"/><path d="M10.6 10.8 H20.2" stroke="#3b3b3b" stroke-width="1.3"/><path d="M0.6 15.299999999999999 L3.4 18.099999999999998 L8.8 12.7" fill="none" stroke="#3b3b3b" stroke-width="1.25"/><path d="M10.6 16.9 H20.2" stroke="#3b3b3b" stroke-width="1.3"/></svg>
<svg class="b" style="left:400px;top:678.2px;" width="21" height="21" viewBox="0 0 21 21"><path d="M0.4 0.9 H20 L12.4 9.8 H9.6 V19.7 H7.9 V10.2 Z" fill="#E4E4E4" stroke="#CACACA" stroke-width="0.9" stroke-linejoin="round"/><path d="M11.4 11.2 L20 19.8 M20 11.2 L11.4 19.8" stroke="#fff" stroke-width="2.6"/><path d="M11.4 11.2 L20 19.8 M20 11.2 L11.4 19.8" stroke="#C6C6C6" stroke-width="1.2"/></svg>
<div class="b" style="left:206px;top:701px;width:218px;height:1px;background:#9C9C9C;"></div>
<div class="b" style="left:0;top:702px;width:436px;height:221.8px;overflow:hidden"><div class="b" style="left:0;top:-702px;width:1920px;height:990px">
<div class="b" style="left:206.2px;top:707.9px;width:190.8px;height:23.7px;background:#C0C0C0;border:1px solid #A3A3A3;border-radius:4px;"></div>
<span class="t" style="top:709.85px;font-size:14px;line-height:20px;color:#262626;font-weight:350;left:217.79999999999998px;transform-origin:0 50%;transform:scaleX(0.9929);">会話の場面に応じた言葉...</span>
<div class="b" style="left:206.2px;top:735.9px;width:190.8px;height:23.7px;background:#C0C0C0;border:1px solid #A3A3A3;border-radius:4px;"></div>
<span class="t" style="top:737.85px;font-size:14px;line-height:20px;color:#262626;font-weight:350;left:217.79999999999998px;transform-origin:0 50%;transform:scaleX(0.9929);">基本的な挨拶の会話はで...</span>
<div class="b" style="left:206.2px;top:763.9px;width:190.8px;height:23.7px;background:#C0C0C0;border:1px solid #A3A3A3;border-radius:4px;"></div>
<span class="t" style="top:765.85px;font-size:14px;line-height:20px;color:#262626;font-weight:350;left:217.79999999999998px;transform-origin:0 50%;transform:scaleX(0.9955);">身近な話題についての会...</span>
<div class="b" style="left:206.2px;top:791.9px;width:190.8px;height:23.7px;background:#C0C0C0;border:1px solid #A3A3A3;border-radius:4px;"></div>
<span class="t" style="top:793.85px;font-size:14px;line-height:20px;color:#262626;font-weight:350;left:217.79999999999998px;transform-origin:0 50%;transform:scaleX(0.9876);">長い会話に参加できる</span>
<div class="b" style="left:206.2px;top:819.9px;width:190.8px;height:23.7px;background:#C0C0C0;border:1px solid #A3A3A3;border-radius:4px;"></div>
<span class="t" style="top:821.85px;font-size:14px;line-height:20px;color:#262626;font-weight:350;left:217.79999999999998px;transform-origin:0 50%;transform:scaleX(0.9955);">日常的なことなら短い会...</span>
<div class="b" style="left:206.2px;top:847.9px;width:190.8px;height:23.7px;background:#C0C0C0;border:1px solid #A3A3A3;border-radius:4px;"></div>
<span class="t" style="top:849.85px;font-size:14px;line-height:20px;color:#262626;font-weight:350;left:217.79999999999998px;transform-origin:0 50%;transform:scaleX(0.9955);">日本語で会話はほとんど...</span>
<div class="b" style="left:206.2px;top:875.9px;width:190.8px;height:23.7px;background:#C0C0C0;border:1px solid #A3A3A3;border-radius:4px;"></div>
<span class="t" style="top:877.85px;font-size:14px;line-height:20px;color:#262626;font-weight:350;left:217.79999999999998px;transform-origin:0 50%;transform:scaleX(0.9464);">不明</span>
<div class="b" style="left:206.2px;top:903.9px;width:190.8px;height:23.7px;background:#C0C0C0;border:1px solid #A3A3A3;border-radius:4px;"></div>
<span class="t" style="top:905.85px;font-size:14px;line-height:20px;color:#262626;font-weight:350;left:217.79999999999998px;transform-origin:0 50%;transform:scaleX(0.9955);">幅広い話題について自由...</span>
</div></div>
<div class="b" style="left:402px;top:707.9px;width:22px;height:215.9px;background:#F0F0F0;"></div>
<div class="b" style="left:410px;top:730.8px;width:5px;height:78.8px;background:#7F7F7F;border-radius:1px;"></div>
<div class="b" style="left:388px;top:130px;width:35px;height:34.5px;background:#fff;border:1px solid #6A6A6A;"></div>
<svg class="b" style="left:393.4px;top:135.4px;" width="22" height="22" viewBox="0 0 22 22"><path d="M11 0.6 V21.4 M0.6 11 H21.4" stroke="#2E9E5B" stroke-width="1.25"/></svg>
<div class="b" style="left:388px;top:177.5px;width:35px;height:34px;background:#fff;border:1px solid #6A6A6A;"></div>
<svg class="b" style="left:393px;top:184px;" width="24" height="22" viewBox="0 0 24 22"><path d="M20.4 2.2 C21.6 2.6 21.6 4 20.8 4.9 L13.2 13 L10.8 11 L18.4 2.9 C19 2.2 19.7 1.9 20.4 2.2 Z" fill="#E4E4E4" stroke="#4A4A4A" stroke-width="1.1"/>
<path d="M10.9 11.3 C7.2 11.4 5.8 15.2 0.9 17.1 C5 19.6 12.2 19.4 13.6 14 Z" fill="#6CB0EA" stroke="#2F7FD0" stroke-width="0.9" stroke-linejoin="round"/></svg>
<div class="b" style="left:0px;top:953px;width:1483px;height:37px;background:#E4E9F1;"></div>
<svg class="b" style="left:31px;top:965px;" width="9" height="15" viewBox="0 0 9 15"><path d="M7.5 1 L1.5 7.5 L7.5 14" fill="none" stroke="#9A9A9A" stroke-width="1.5"/></svg>
<svg class="b" style="left:72px;top:965px;" width="9" height="15" viewBox="0 0 9 15"><path d="M1.5 1 L7.5 7.5 L1.5 14" fill="none" stroke="#9A9A9A" stroke-width="1.5"/></svg>
<span class="t" style="top:958.50px;font-size:20px;line-height:28px;color:#303030;left:152.5px;transform-origin:0 50%;transform:scaleX(0.9374);">data</span>
<div class="b" style="left:206.8px;top:961px;width:1px;height:22px;background:#C9CDD3;"></div>
<div class="b" style="left:207px;top:953px;width:6px;height:6px;background:#fff;"></div>
<div class="b" style="left:207px;top:953px;width:6px;height:6px;background:#E4E9F1;border-top-right-radius:5px;"></div>
<div class="b" style="left:279px;top:953px;width:6px;height:6px;background:#fff;"></div>
<div class="b" style="left:279px;top:953px;width:6px;height:6px;background:#E4E9F1;border-top-left-radius:5px;"></div>
<div class="b" style="left:213px;top:953px;width:66px;height:34.5px;background:#fff;border-radius:5px;border-top-left-radius:0;border-top-right-radius:0;"></div>
<span class="t" style="top:955.50px;font-size:20px;line-height:28px;color:#303030;left:225.5px;transform-origin:0 50%;transform:scaleX(0.9822);">pivot</span>
<div class="b" style="left:223px;top:982.5px;width:46px;height:2.5px;background:#107C41;"></div>
<div class="b" style="left:284px;top:961px;width:1px;height:22px;background:#C9CDD3;"></div>
<svg class="b" style="left:337px;top:965px;" width="14" height="14" viewBox="0 0 14 14"><path d="M7 0 V14 M0 7 H14" stroke="#333" stroke-width="1.6"/></svg>
<div class="b" style="left:892.5px;top:967.3px;width:3.2px;height:2.6px;background:#262626;"></div>
<div class="b" style="left:892.5px;top:972.3px;width:3.2px;height:2.6px;background:#262626;"></div>
<div class="b" style="left:892.5px;top:977.3px;width:3.2px;height:2.6px;background:#262626;"></div>
<div class="b" style="left:914px;top:961.8px;width:544.6px;height:21.1px;background:#F5F5F5;border-radius:10.5px;"></div>
<svg class="b" style="left:920px;top:967px;" width="9" height="11" viewBox="0 0 9 11"><path d="M0.8 5.5 L8 0.5 V10.5 Z" fill="#767676" stroke="#767676" stroke-width="0.6" stroke-linejoin="round"/></svg>
<div class="b" style="left:935px;top:966.9px;width:422.4px;height:11px;background:#737373;border-radius:5.5px;"></div>
<svg class="b" style="left:1444px;top:967px;" width="9" height="11" viewBox="0 0 9 11"><path d="M8.2 5.5 L1 0.5 V10.5 Z" fill="#767676" stroke="#767676" stroke-width="0.6" stroke-linejoin="round"/></svg>
<div class="b" style="left:1456px;top:98px;width:27px;height:855px;background:#E4E9F1;"></div>
<div class="b" style="left:1459px;top:99.5px;width:21px;height:856.1px;background:#F5F5F5;border-radius:6px 6px 10.5px 10.5px;"></div>
<svg class="b" style="left:1463.9px;top:104px;" width="11" height="9" viewBox="0 0 11 9"><path d="M5.5 0.8 L10.6 8 H0.4 Z" fill="#767676" stroke="#767676" stroke-width="0.6" stroke-linejoin="round"/></svg>
<div class="b" style="left:1463.9px;top:118.8px;width:11px;height:480px;background:#707070;border-radius:5.5px;"></div>
<svg class="b" style="left:1463.9px;top:941px;" width="11" height="9" viewBox="0 0 11 9"><path d="M5.5 8.2 L10.6 1 H0.4 Z" fill="#767676" stroke="#767676" stroke-width="0.6" stroke-linejoin="round"/></svg>
<div class="b" style="left:1482.2px;top:98px;width:1px;height:892px;background:#BDBDBD;"></div>
<div class="b" style="left:1483px;top:98px;width:437px;height:892px;background:#F0F0F0;"></div>
<div class="b" style="left:1483px;top:97.7px;width:437px;height:5px;background:linear-gradient(rgba(120,120,120,0.32),rgba(120,120,120,0.12) 45%,rgba(120,120,120,0));"></div>
<span class="t" style="top:113.30px;font-size:17.5px;line-height:24px;color:#1E1E1E;font-weight:700;left:1497px;transform-origin:0 50%;transform:scaleX(0.8144);">ピボットグラフのフィールド</span>
<svg class="b" style="left:1843px;top:120px;" width="18" height="11" viewBox="0 0 18 11"><path d="M1 1.2 L9 9.4 L17 1.2" fill="none" stroke="#333" stroke-width="1.4"/></svg>
<svg class="b" style="left:1885.5px;top:118.8px;" width="13.5" height="13.5" viewBox="0 0 13.5 13.5"><path d="M0.6 0.6 L12.9 12.9 M12.9 0.6 L0.6 12.9" stroke="#333" stroke-width="1.4"/></svg>
<span class="t" style="top:152.20px;font-size:14.5px;line-height:20px;color:#1E1E1E;font-weight:700;left:1499px;transform-origin:0 50%;transform:scaleX(0.8109);">アクティブ</span>
<div class="b" style="left:1498px;top:179.2px;width:62px;height:2.8px;background:#107C41;"></div>
<span class="t" style="top:152.00px;font-size:14.5px;line-height:20px;color:#333;left:1589px;transform-origin:0 50%;transform:scaleX(0.8471);">すべて</span>
<span class="t" style="top:195.50px;font-size:14.5px;line-height:20px;color:#222;left:1499px;transform-origin:0 50%;transform:scaleX(0.8190);">レポートに追加するフィールドを選択してください:</span>
<div class="b" style="left:1848px;top:187px;width:56.7px;height:34.5px;background:#fff;border:1px solid #ADADAD;"></div>
<svg class="b" style="left:1860px;top:194px;" width="20" height="20" viewBox="0 0 20 20"><circle cx="10" cy="10" r="3.1" fill="none" stroke="#333" stroke-width="1.2"/><path d="M7.77 3.68 L8.15 0.89 L11.85 0.89 L12.23 3.68 L14.35 4.91 L16.97 3.84 L18.82 7.04 L16.59 8.78 L16.59 11.22 L18.82 12.96 L16.97 16.16 L14.35 15.09 L12.23 16.32 L11.85 19.11 L8.15 19.11 L7.77 16.32 L5.65 15.09 L3.03 16.16 L1.18 12.96 L3.41 11.22 L3.41 8.78 L1.18 7.04 L3.03 3.84 L5.65 4.91 Z" fill="none" stroke="#333" stroke-width="1.25" stroke-linejoin="round"/></svg>
<svg class="b" style="left:1889px;top:201.5px;" width="9" height="6" viewBox="0 0 9 6"><path d="M1 1 L4.5 4.5 L8 1" fill="none" stroke="#333" stroke-width="1.4"/></svg>
<div class="b" style="left:1498px;top:239px;width:406.7px;height:29.5px;background:#fff;border:1px solid #ADADAD;"></div>
<span class="t" style="top:243.20px;font-size:14.5px;line-height:20px;color:#767676;left:1506px;transform-origin:0 50%;transform:scaleX(1.0172);">検索</span>
<svg class="b" style="left:1880px;top:244px;" width="21" height="21" viewBox="0 0 21 21"><circle cx="12.6" cy="7.6" r="6" fill="none" stroke="#333" stroke-width="1.3"/><path d="M8.4 12 L1 19.6" stroke="#333" stroke-width="1.3"/></svg>
<div class="b" style="left:1498px;top:290.5px;width:406.7px;height:252px;background:#fff;border:1px solid #ADADAD;"></div>
<svg class="b" style="left:1507px;top:298.6px;" width="10" height="9" viewBox="0 0 10 9"><path d="M0.2 8 H8.4 V0.4" fill="none" stroke="#333" stroke-width="1.35"/></svg>
<svg class="b" style="left:1522px;top:293px;" width="20" height="20" viewBox="0 0 20 20"><rect x="0.6" y="0.6" width="18.8" height="18.8" fill="#fff" stroke="#444" stroke-width="1.2"/><rect x="0.6" y="0.6" width="18.8" height="4" fill="#777" stroke="none"/><path d="M0.6 8.3 H19.4" stroke="#8A8A8A" stroke-width="0.9"/><path d="M0.6 12.0 H19.4" stroke="#8A8A8A" stroke-width="0.9"/><path d="M0.6 15.7 H19.4" stroke="#8A8A8A" stroke-width="0.9"/><path d="M6.9 4.6 V19.4" stroke="#8A8A8A" stroke-width="0.9"/><path d="M13.1 4.6 V19.4" stroke="#8A8A8A" stroke-width="0.9"/><rect x="0.6" y="0.6" width="18.8" height="18.8" fill="none" stroke="#444" stroke-width="1.2"/></svg>
<span class="t" style="top:293.00px;font-size:15px;line-height:21px;color:#1E1E1E;font-weight:700;left:1544.5px;transform-origin:0 50%;transform:scaleX(1.1812);">_00450_mhlw_00450224_ro_1_7_8_fu...</span>
<div class="b" style="left:1546px;top:316.2px;width:16px;height:16px;background:#fff;border:1px solid #8A8A8A;"></div>
<span class="t" style="top:316.60px;font-size:15px;line-height:21px;color:#1E1E1E;left:1569.5px;transform-origin:0 50%;transform:scaleX(0.9662);">日付</span>
<div class="b" style="left:1546px;top:347.3px;width:16px;height:16px;background:#fff;border:1px solid #8A8A8A;"></div>
<span class="t" style="top:347.70px;font-size:15px;line-height:21px;color:#1E1E1E;left:1569.5px;transform-origin:0 50%;transform:scaleX(0.9662);">項目</span>
<svg class="b" style="left:1863.5px;top:349.8px;" width="15.5" height="15.5" viewBox="0 0 15.5 15.5"><path d="M0.8 0.8 H14.7 L9.5 7.3 V14.5 H6.0 V7.3 Z" fill="none" stroke="#444" stroke-width="1.1" stroke-linejoin="round"/></svg>
<div class="b" style="left:1546px;top:378.4px;width:16px;height:16px;background:#107C41;"></div>
<svg class="b" style="left:1546px;top:378.4px;" width="16" height="16" viewBox="0 0 16 16"><path d="M3.6 8 L6.8 11 L12.4 5" fill="none" stroke="#fff" stroke-width="1.4"/></svg>
<span class="t" style="top:378.80px;font-size:15px;line-height:21px;color:#1E1E1E;font-weight:700;left:1569.5px;transform-origin:0 50%;">属性</span>
<div class="b" style="left:1546px;top:409.5px;width:16px;height:16px;background:#fff;border:1px solid #8A8A8A;"></div>
<span class="t" style="top:409.90px;font-size:15px;line-height:21px;color:#1E1E1E;left:1569.5px;transform-origin:0 50%;transform:scaleX(0.9662);">質問</span>
<svg class="b" style="left:1863.5px;top:412.0px;" width="15.5" height="15.5" viewBox="0 0 15.5 15.5"><path d="M0.8 0.8 H14.7 L9.5 7.3 V14.5 H6.0 V7.3 Z" fill="none" stroke="#444" stroke-width="1.1" stroke-linejoin="round"/></svg>
<div class="b" style="left:1546px;top:440.6px;width:16px;height:16px;background:#107C41;"></div>
<svg class="b" style="left:1546px;top:440.6px;" width="16" height="16" viewBox="0 0 16 16"><path d="M3.6 8 L6.8 11 L12.4 5" fill="none" stroke="#fff" stroke-width="1.4"/></svg>
<span class="t" style="top:441.00px;font-size:15px;line-height:21px;color:#1E1E1E;font-weight:700;left:1569.5px;transform-origin:0 50%;">回答</span>
<div class="b" style="left:1546px;top:471.7px;width:16px;height:16px;background:#107C41;"></div>
<svg class="b" style="left:1546px;top:471.7px;" width="16" height="16" viewBox="0 0 16 16"><path d="M3.6 8 L6.8 11 L12.4 5" fill="none" stroke="#fff" stroke-width="1.4"/></svg>
<span class="t" style="top:472.10px;font-size:15px;line-height:21px;color:#1E1E1E;font-weight:700;left:1569.5px;transform-origin:0 50%;transform:scaleX(1.1391);">割合 (%)</span>
<div class="b" style="left:1546px;top:502.8px;width:16px;height:16px;background:#fff;border:1px solid #8A8A8A;"></div>
<span class="t" style="top:503.20px;font-size:15px;line-height:21px;color:#1E1E1E;left:1569.5px;transform-origin:0 50%;transform:scaleX(1.0647);">日付 (年)</span>
<svg class="b" style="left:1863.5px;top:505.3px;" width="15.5" height="15.5" viewBox="0 0 15.5 15.5"><path d="M0.8 0.8 H14.7 L9.5 7.3 V14.5 H6.0 V7.3 Z" fill="none" stroke="#444" stroke-width="1.1" stroke-linejoin="round"/></svg>
<div class="b" style="left:1499px;top:530px;width:384px;height:12px;overflow:hidden">
<div class="b" style="left:47px;top:3.8px;width:16px;height:16px;background:#fff;border:1px solid #8A8A8A"></div>
<span class="t" style="left:70.5px;top:5px;font-size:15px;line-height:21px;color:#1E1E1E">日付 (四半期)</span>
</div>
<div class="b" style="left:1883px;top:291.5px;width:20.7px;height:250px;background:#F0F0F0;"></div>
<svg class="b" style="left:1888.3px;top:298px;" width="11" height="8" viewBox="0 0 11 8"><path d="M5.5 0.8 L10.4 7 H0.6 Z" fill="#767676" stroke="#767676" stroke-width="0.6" stroke-linejoin="round"/></svg>
<div class="b" style="left:1888.6px;top:313px;width:10.4px;height:166px;background:#767676;"></div>
<svg class="b" style="left:1888.3px;top:527px;" width="11" height="8" viewBox="0 0 11 8"><path d="M5.5 7.2 L10.4 1 H0.6 Z" fill="#767676" stroke="#767676" stroke-width="0.6" stroke-linejoin="round"/></svg>
<div class="b" style="left:1500px;top:561.5px;width:410px;height:0;border-top:1px dotted #BDBDBD"></div>
<span class="t" style="top:568.30px;font-size:14.5px;line-height:20px;color:#222;left:1502.5px;transform-origin:0 50%;transform:scaleX(0.7776);">次のボックス間でフィールドをドラッグしてください:</span>
<div class="b" style="left:1703px;top:608.5px;width:1.2px;height:316px;background:#C3C3C3;"></div>
<div class="b" style="left:1502px;top:766.2px;width:404px;height:1.2px;background:#C3C3C3;"></div>
<svg class="b" style="left:1507px;top:611.5px;" width="14.5" height="14" viewBox="0 0 14.5 14"><path d="M0.8 0.8 H13.7 L8.8 6.6 V13 H5.7 V6.6 Z" fill="#8A8A8A" stroke="#8A8A8A" stroke-width="1.1" stroke-linejoin="round"/></svg>
<span class="t" style="top:609.50px;font-size:14.5px;line-height:20px;color:#222;left:1530px;transform-origin:0 50%;transform:scaleX(0.7131);">フィルター</span>
<div class="b" style="left:1502px;top:634px;width:194px;height:125px;background:#fff;"></div>
<svg class="b" style="left:1712.5px;top:612px;" width="11" height="11" viewBox="0 0 11 11"><rect x="0" y="0" width="3.6" height="10.6" fill="#9A9A9A"/><path d="M5.6 0 V10.6 M7.8 0 V10.6 M10 0 V10.6" stroke="#B5B5B5" stroke-width="1"/></svg>
<span class="t" style="top:609.50px;font-size:14.5px;line-height:20px;color:#222;left:1734px;transform-origin:0 50%;transform:scaleX(1.1020);">凡例 (系列)</span>
<div class="b" style="left:1706px;top:634px;width:200px;height:125px;background:#fff;"></div>
<div class="b" style="left:1707px;top:636px;width:198px;height:26.6px;background:#fff;border:1px solid #ADADAD;"></div>
<span class="t" style="top:639.50px;font-size:15px;line-height:21px;color:#222;left:1717.5px;transform-origin:0 50%;">回答</span>
<svg class="b" style="left:1886px;top:647px;" width="9" height="6" viewBox="0 0 9 6"><path d="M1 1 L4.5 4.5 L8 1" fill="none" stroke="#333" stroke-width="1.4"/></svg>
<svg class="b" style="left:1507.5px;top:779px;" width="13" height="11" viewBox="0 0 13 11"><rect x="0" y="0" width="12.4" height="3.4" fill="#9A9A9A"/><path d="M0 5.8 H12.4 M0 8 H12.4 M0 10.2 H12.4" stroke="#B5B5B5" stroke-width="1"/></svg>
<span class="t" style="top:775.40px;font-size:14.5px;line-height:20px;color:#222;left:1530px;transform-origin:0 50%;transform:scaleX(1.0906);">軸 (分類項目)</span>
<div class="b" style="left:1502px;top:800.5px;width:194px;height:124px;background:#fff;"></div>
<div class="b" style="left:1503.5px;top:802.5px;width:191.5px;height:25.8px;background:#fff;border:1px solid #ADADAD;"></div>
<span class="t" style="top:805.90px;font-size:15px;line-height:21px;color:#222;left:1513px;transform-origin:0 50%;">属性</span>
<svg class="b" style="left:1676px;top:813px;" width="9" height="6" viewBox="0 0 9 6"><path d="M1 1 L4.5 4.5 L8 1" fill="none" stroke="#333" stroke-width="1.4"/></svg>
<span class="t" style="top:772.00px;font-size:17px;line-height:24px;color:#8A8A8A;left:1711.5px;transform-origin:0 50%;transform:scaleX(1.2363);font-family:"Liberation Serif",serif;">Σ</span>
<span class="t" style="top:775.40px;font-size:14.5px;line-height:20px;color:#222;left:1734.5px;transform-origin:0 50%;transform:scaleX(1.0345);">値</span>
<div class="b" style="left:1706px;top:800.5px;width:200px;height:124px;background:#fff;"></div>
<div class="b" style="left:1707px;top:802.5px;width:198px;height:25.8px;background:#fff;border:1px solid #ADADAD;"></div>
<span class="t" style="top:805.90px;font-size:15px;line-height:21px;color:#222;left:1717.5px;transform-origin:0 50%;transform:scaleX(1.1000);">合計 / 割合 (%)</span>
<svg class="b" style="left:1886px;top:813px;" width="9" height="6" viewBox="0 0 9 6"><path d="M1 1 L4.5 4.5 L8 1" fill="none" stroke="#333" stroke-width="1.4"/></svg>
<div class="b" style="left:1506px;top:958.8px;width:15.6px;height:15.6px;background:#fff;border:1px solid #555;border-radius:2px;"></div>
<span class="t" style="top:956.80px;font-size:14.5px;line-height:20px;color:#222;left:1528.8px;transform-origin:0 50%;transform:scaleX(0.8647);">レイアウトの更新を保留する</span>
<div class="b" style="left:1862.5px;top:950.5px;width:43px;height:30px;background:#F3F3F3;border:1px solid #DCDCDC;"></div>
<span class="t" style="top:956.00px;font-size:14.5px;line-height:20px;color:#ABABAB;left:1869.5px;transform-origin:0 50%;">更新</span>
<div class="b" style="left:0px;top:0px;width:1920px;height:60px;background:#107C41;"></div>
<svg class="b" style="left:19px;top:19px;" width="22" height="22" viewBox="0 0 22 22"><g fill="none" stroke="#fff" stroke-width="1.15">
<path d="M4.4 7.4 V3.2 a1.8 1.8 0 0 1 1.8 -1.8 H17.6 a1.8 1.8 0 0 1 1.8 1.8 V19 a1.8 1.8 0 0 1 -1.8 1.8 H9.2"/>
<path d="M4.4 5.9 H19.4 M12.3 5.9 V20.8 M12.3 11.6 H19.4"/></g>
<rect x="1" y="7.8" width="10.8" height="10.8" rx="2.4" fill="#fff"/>
<path d="M4.3 10.8 L8.5 15.8 M8.5 10.8 L4.3 15.8" stroke="#107C41" stroke-width="1.5" fill="none"/></svg>
<span class="t" style="top:20.00px;font-size:15px;line-height:21px;color:#fff;left:61px;transform-origin:0 50%;transform:scaleX(0.9914);">自動保存</span>
<div class="b" style="left:130px;top:17px;width:59px;height:25px;background:#fff;border-radius:12.5px;"></div>
<span class="t" style="top:18.80px;font-size:15.5px;line-height:22px;color:#107C41;left:137.5px;transform-origin:0 50%;transform:scaleX(0.7093);">オン</span>
<div class="b" style="left:167px;top:21px;width:17.5px;height:17.5px;background:#107C41;border-radius:9px;"></div>
<svg class="b" style="left:204px;top:19px;" width="22" height="22" viewBox="0 0 22 22"><g fill="none" stroke="#fff" stroke-width="1.4">
<path d="M9 20 H4 L1.7 17.7 V1.7 H19.3 V8.5"/>
<path d="M6 1.7 V8 H15.5 V1.7"/>
<path d="M6.5 20 V13.5 H9"/>
<path d="M10.3 14.2 A5 5 0 0 1 19.5 12.2 M20.7 16.2 A5 5 0 0 1 11.5 18.4"/>
<path d="M19.8 9.5 V12.6 H16.7 M11.2 21.2 V18.1 H14.3"/></g></svg>
<svg class="b" style="left:240px;top:19px;" width="20" height="22" viewBox="0 0 20 22"><g fill="none" stroke="#fff" stroke-width="1.5">
<path d="M1.5 1.5 V9.5 H9.5"/><path d="M1.8 9.2 L7.5 3.8 A6.3 6.3 0 0 1 16.3 12.8 L6.5 21"/></g></svg>
<svg class="b" style="left:267px;top:26px;" width="9" height="7" viewBox="0 0 9 7"><path d="M1 1.2 L4.5 4.8 L8 1.2" fill="none" stroke="#fff" stroke-width="1.4"/></svg>
<svg class="b" style="left:288px;top:19px;" width="20" height="22" viewBox="0 0 20 22"><g fill="none" stroke="#fff" stroke-opacity="0.42" stroke-width="1.5">
<path d="M18.5 1.5 V9.5 H10.5"/><path d="M18.2 9.2 L12.5 3.8 A6.3 6.3 0 0 0 3.7 12.8 L13.5 21"/></g></svg>
<svg class="b" style="left:315px;top:26px;" width="9" height="7" viewBox="0 0 9 7"><path d="M1 1.2 L4.5 4.8 L8 1.2" fill="none" stroke="#fff" stroke-opacity="0.42" stroke-width="1.4"/></svg>
<svg class="b" style="left:340px;top:26px;" width="11" height="10" viewBox="0 0 11 10"><path d="M0.8 1 H10.2 M2 4.6 L5.5 8.2 L9 4.6" fill="none" stroke="#fff" stroke-width="1.4"/></svg>
<span class="t" style="top:20.00px;font-size:15px;line-height:21px;color:#fff;left:381px;transform-origin:0 50%;transform:scaleX(1.1263);">00450-mhlw-00450224-ro_1-7-8-full-lis···</span>
<div class="b" style="left:701.3px;top:27.6px;width:5.4px;height:5.4px;background:#fff;border-radius:2.7px;"></div>
<span class="t" style="top:20.00px;font-size:15px;line-height:21px;color:#fff;left:714.6px;transform-origin:0 50%;transform:scaleX(1.0432);">保存中...</span>
<svg class="b" style="left:781px;top:26px;" width="13" height="8" viewBox="0 0 13 8"><path d="M1 1.2 L6.5 6.6 L12 1.2" fill="none" stroke="#fff" stroke-width="1.4"/></svg>
<div class="b" style="left:839.5px;top:10.3px;width:459.2px;height:39.6px;background:#D2E5DA;border:1px solid #9DB5A8;border-radius:5px;border-top-color:#C9DDD2;border-bottom-color:#74897D;"></div>
<svg class="b" style="left:855px;top:20px;" width="20" height="20" viewBox="0 0 20 20"><circle cx="11.8" cy="7.6" r="5.6" fill="none" stroke="#2B6B47" stroke-width="1.5"/><path d="M7.8 11.6 L1.2 18.2" stroke="#2B6B47" stroke-width="1.5"/></svg>
<span class="t" style="top:19.00px;font-size:16px;line-height:22px;color:#2B5B41;left:891px;transform-origin:0 50%;transform:scaleX(1.0620);">検索</span>
<div class="b" style="left:1694.5px;top:15px;width:30px;height:30px;background:#D6D6D6;border-radius:15px;"></div>
<svg class="b" style="left:1694.5px;top:15px;" width="30" height="30" viewBox="0 0 30 30"><circle cx="15.2" cy="10.7" r="4.9" fill="none" stroke="#555" stroke-width="1.3"/><path d="M6.9 23.2 C7.4 14.6 23 14.6 23.5 23.2" fill="none" stroke="#555" stroke-width="1.3"/></svg>
<div class="b" style="left:1763.6px;top:28.9px;width:13px;height:1.15px;background:#fff;"></div>
<svg class="b" style="left:1823px;top:22px;" width="15" height="15" viewBox="0 0 15 15"><rect x="0.8" y="3.6" width="9.8" height="9.8" rx="2" fill="none" stroke="#fff" stroke-width="1.3"/><path d="M3.8 1 H10.6 a2.8 2.8 0 0 1 2.8 2.8 V10.4" fill="none" stroke="#fff" stroke-width="1.3"/></svg>
<svg class="b" style="left:1883px;top:23px;" width="14" height="14" viewBox="0 0 14 14"><path d="M0.8 0.8 L13.2 13.2 M13.2 0.8 L0.8 13.2" stroke="#fff" stroke-width="1.5"/></svg>
<div class="b" style="left:0px;top:60px;width:1920px;height:38px;background:#E4E9F1;"></div>
<span class="t" style="top:67.50px;font-size:17.5px;line-height:24px;color:#2F2F2F;left:15px;transform-origin:0 50%;transform:scaleX(0.6571);">ファイル</span>
<span class="t" style="top:67.50px;font-size:17.5px;line-height:24px;color:#2F2F2F;left:85px;transform-origin:0 50%;transform:scaleX(0.8079);">ホーム</span>
<span class="t" style="top:67.50px;font-size:17.5px;line-height:24px;color:#2F2F2F;left:151px;transform-origin:0 50%;transform:scaleX(0.9429);">挿入</span>
<span class="t" style="top:67.50px;font-size:17.5px;line-height:24px;color:#2F2F2F;left:209px;transform-origin:0 50%;transform:scaleX(0.9714);">描画</span>
<span class="t" style="top:67.50px;font-size:17.5px;line-height:24px;color:#2F2F2F;left:270px;transform-origin:0 50%;transform:scaleX(0.7750);">ページ レイアウト</span>
<span class="t" style="top:67.50px;font-size:17.5px;line-height:24px;color:#2F2F2F;left:408px;transform-origin:0 50%;transform:scaleX(0.9714);">数式</span>
<span class="t" style="top:67.50px;font-size:17.5px;line-height:24px;color:#2F2F2F;left:467px;transform-origin:0 50%;transform:scaleX(0.8000);">データ</span>
<span class="t" style="top:67.50px;font-size:17.5px;line-height:24px;color:#2F2F2F;left:533px;transform-origin:0 50%;transform:scaleX(0.9714);">校閲</span>
<span class="t" style="top:67.50px;font-size:17.5px;line-height:24px;color:#2F2F2F;left:591px;transform-origin:0 50%;transform:scaleX(0.9714);">表示</span>
<span class="t" style="top:67.50px;font-size:17.5px;line-height:24px;color:#2F2F2F;left:649px;transform-origin:0 50%;transform:scaleX(0.9714);">自動化</span>
<span class="t" style="top:67.50px;font-size:17.5px;line-height:24px;color:#2F2F2F;left:725px;transform-origin:0 50%;transform:scaleX(0.7810);">ヘルプ</span>
<span class="t" style="top:67.50px;font-size:17.5px;line-height:24px;color:#2F2F2F;left:794px;transform-origin:0 50%;transform:scaleX(1.0611);">Acrobat</span>
<span class="t" style="top:67.50px;font-size:17.5px;line-height:24px;color:#2F2F2F;left:891px;transform-origin:0 50%;transform:scaleX(1.0388);">Power Pivot</span>
<span class="t" style="top:67.50px;font-size:17px;line-height:24px;color:#107C41;left:1019px;transform-origin:0 50%;transform:scaleX(0.7843);">ピボットグラフ分析</span>
<span class="t" style="top:67.50px;font-size:17px;line-height:24px;color:#107C41;left:1167px;transform-origin:0 50%;transform:scaleX(0.7941);">デザイン</span>
<span class="t" style="top:67.50px;font-size:17px;line-height:24px;color:#107C41;left:1246px;transform-origin:0 50%;">書式</span>
<div class="b" style="left:1729.8px;top:64.2px;width:83.8px;height:29.6px;background:#fff;border:1px solid #8A8A8A;border-radius:5px;"></div>
<svg class="b" style="left:1737px;top:72px;" width="15" height="14" viewBox="0 0 15 14"><path d="M1 1 H13.6 V9.6 H6 L3.2 12.6 V9.6 H1 Z" fill="none" stroke="#333" stroke-width="1.2" stroke-linejoin="round"/></svg>
<span class="t" style="top:67.50px;font-size:17px;line-height:24px;color:#222;left:1755px;transform-origin:0 50%;transform:scaleX(0.7426);">コメント</span>
<div class="b" style="left:1824px;top:64.2px;width:81px;height:29.6px;background:#107C41;border-radius:5px;"></div>
<svg class="b" style="left:1830px;top:71px;" width="16" height="16" viewBox="0 0 16 16"><path d="M6 3.2 H3.2 a1.8 1.8 0 0 0 -1.8 1.8 V12 a1.8 1.8 0 0 0 1.8 1.8 H11 a1.8 1.8 0 0 0 1.8 -1.8 V10.6" fill="none" stroke="#fff" stroke-width="1.3"/><path d="M5.2 10.2 C5.6 6.8 7.6 5.2 10.4 5.2 V2.6 L14.8 6.6 L10.4 10.6 V8 C8.2 7.9 6.6 8.6 5.2 10.2 Z" fill="none" stroke="#fff" stroke-width="1.2" stroke-linejoin="round"/></svg>
<span class="t" style="top:68.50px;font-size:16px;line-height:22px;color:#fff;left:1850px;transform-origin:0 50%;transform:scaleX(1.0307);">共有</span>
<svg class="b" style="left:1892px;top:76px;" width="9" height="6" viewBox="0 0 9 6"><path d="M1 1 L4.5 4.5 L8 1" fill="none" stroke="#fff" stroke-width="1.3"/></svg>
</body></html>
